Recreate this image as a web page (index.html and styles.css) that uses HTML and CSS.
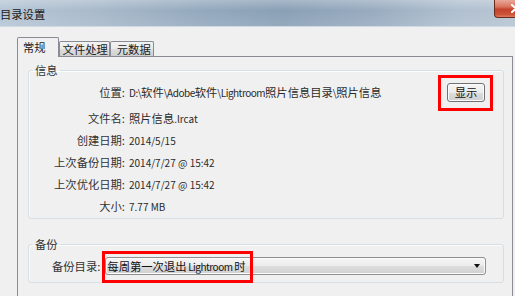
FILE: index.html
```html
<!DOCTYPE html>
<html lang="zh-CN">
<head>
<meta charset="utf-8">
<title>目录设置</title>
<link rel="stylesheet" href="styles.css">
</head>
<body>
<div class="window">
  <div class="titlebar">
    <span class="title">目录设置</span>
    <span class="close">
      <svg width="10" height="9" viewBox="0 0 10 9"><path d="M1 1 L9 8 M9 1 L1 8" stroke="#fff" stroke-width="2.2" stroke-linecap="round"/></svg>
    </span>
  </div>
  <div class="body">
    <div class="tabs">
      <div class="tab active t1">常规</div>
      <div class="tab t2">文件处理</div>
      <div class="tab t3">元数据</div>
    </div>
    <div class="panel">
      <fieldset class="group info">
        <legend>信息</legend>
        <div class="row first">
          <span class="label">位置:</span>
          <span class="value"><span class="lat tight">D:\</span>软件<span class="lat tight">\Adobe</span>软件<span class="lat tight">\Lightroom</span>照片信息目录<span class="lat tight">\</span>照片信息</span>
          <span class="mark"><button class="btn">显示</button></span>
        </div>
        <div class="row"><span class="label">文件名:</span><span class="value">照片信息<span class="lat">.lrcat</span></span></div>
        <div class="row"><span class="label">创建日期:</span><span class="value lat">2014/5/15</span></div>
        <div class="row"><span class="label">上次备份日期:</span><span class="value lat">2014/7/27 @ 15:42</span></div>
        <div class="row"><span class="label">上次优化日期:</span><span class="value lat">2014/7/27 @ 15:42</span></div>
        <div class="row"><span class="label">大小:</span><span class="value lat">7.77 MB</span></div>
      </fieldset>
      <fieldset class="group backup">
        <legend>备份</legend>
        <div class="backup-row">
          <span class="label">备份目录:</span>
          <div class="select">
            <span class="select-text">每周第一次退出<span class="lat tight"> Lightroom </span>时</span>
            <span class="arrow"></span>
          </div>
        </div>
      </fieldset>
    </div>
  </div>
</div>
</body>
</html>
```

FILE: styles.css
```css
html, body {
  margin: 0;
  padding: 0;
  overflow: hidden;
}
body {
  width: 515px;
  height: 296px;
  background: #f0f0f0;
  font-family: "Noto Sans CJK SC", "Noto Sans", sans-serif;
  font-size: 11.3px;
  color: #333;
}
.lat {
  font-size: 10px;
}
.lat.tight {
  letter-spacing: -0.5px;
}
.window {
  width: 515px;
  height: 296px;
  overflow: hidden;
}
.titlebar {
  height: 26px;
  border-bottom: 1px solid #cfd9e3;
  display: flex;
  justify-content: space-between;
  align-items: flex-start;
  background:
    linear-gradient(180deg, rgba(255,255,255,0.25) 0%, rgba(255,255,255,0) 40%, rgba(255,255,255,0.1) 100%),
    linear-gradient(90deg, #b6c6d6 0%, #a9bacb 18%, #93a8bd 40%, #8aa0b6 55%, #98abbf 72%, #afbfcf 88%, #b7c5d3 100%);
}
.title {
  padding-top: 6px;
  line-height: 16px;
  color: #1a1a1a;
}
.close {
  width: 43px;
  height: 18px;
  margin-right: -22px;
  box-sizing: border-box;
  border: 1px solid #6b2a20;
  border-top: none;
  border-radius: 0 0 0 4px;
  background: linear-gradient(180deg, #e9a89a 0%, #d9735d 40%, #c2432b 55%, #cc5438 85%, #e07a5e 100%);
  display: flex;
  align-items: center;
  justify-content: center;
}
.body {
  padding: 10px 2px 0 17px;
}
.tabs {
  display: flex;
  align-items: flex-end;
  height: 20px;
  margin-bottom: -1px;
  position: relative;
  z-index: 1;
}
.tab {
  box-sizing: border-box;
  border: 1px solid #898c95;
  border-bottom: none;
  height: 15px;
  margin-bottom: 1px;
  line-height: 14px;
  color: #222;
  background: linear-gradient(180deg, #f2f2f2 0%, #ebebeb 50%, #dddddd 51%, #cfcfcf 100%);
  border-radius: 2px 2px 0 0;
}
.tab.active {
  height: 20px;
  margin-bottom: 0;
  line-height: 19px;
  background: #f0f0f0;
}
.t1 { padding: 0 12px 0 5px; }
.t2 { padding: 0 1px 0 3px; }
.t3 { padding: 0 2px 0 6px; }
.panel {
  border: 1px solid #898c95;
  background: #f0f0f0;
  padding: 6px 8px 0 10px;
  height: 260px;
}
.group {
  margin: 0;
  padding: 0;
  min-width: 0;
  border: 1px solid #d5dfe5;
  border-radius: 3px;
  box-shadow: inset 1px 1px 0 #fbfcfd;
}
.group legend {
  margin-left: 4px;
  padding: 0 2px;
  line-height: 14px;
  color: #333;
}
.info {
  padding: 4px 0 1px 0;
}
.row {
  display: grid;
  grid-template-columns: 96px 1fr auto;
  column-gap: 4px;
  height: 22px;
  align-items: center;
}
.row.first {
  margin-bottom: 4px;
}
.label {
  text-align: right;
  white-space: nowrap;
  color: #333;
}
.value {
  white-space: nowrap;
  color: #2a2a2a;
}
.mark {
  position: relative;
  display: inline-flex;
  margin-right: 18px;
}
.mark::after {
  content: "";
  position: absolute;
  top: -8px;
  bottom: -9px;
  left: -9px;
  right: -8px;
  border: 3px solid #f00;
}
.btn {
  width: 38px;
  height: 19px;
  padding: 0;
  box-sizing: border-box;
  font: inherit;
  color: #111;
  border: 1px solid #707070;
  border-radius: 3px;
  background: linear-gradient(180deg, #f6f6f6 0%, #ebebeb 50%, #dddddd 51%, #cfcfcf 100%);
  box-shadow: inset 0 0 0 1px #fbfbfb;
  line-height: 16px;
}
.backup {
  margin-top: 18px;
  padding: 6px 17px 7px 0;
}
.backup-row {
  display: flex;
  align-items: center;
  gap: 5px;
  padding-left: 23px;
}
.select {
  flex: 1;
  height: 18px;
  box-sizing: border-box;
  border: 1px solid #8e8f8f;
  border-radius: 3px;
  background: linear-gradient(180deg, #f6f6f6 0%, #ebebeb 50%, #dddddd 51%, #d0d0d0 100%);
  box-shadow: inset 0 0 0 1px #fbfbfb;
  display: flex;
  align-items: center;
  padding: 0 5px 0 1px;
}
.select-text {
  position: relative;
  line-height: 14px;
  color: #111;
  white-space: nowrap;
}
.select-text::after {
  content: "";
  position: absolute;
  top: -8px;
  bottom: -9px;
  left: -5px;
  right: -7px;
  border: 3px solid #f00;
}
.arrow {
  margin-left: auto;
  width: 0;
  height: 0;
  border-left: 3.5px solid transparent;
  border-right: 3.5px solid transparent;
  border-top: 4px solid #111;
}
```
